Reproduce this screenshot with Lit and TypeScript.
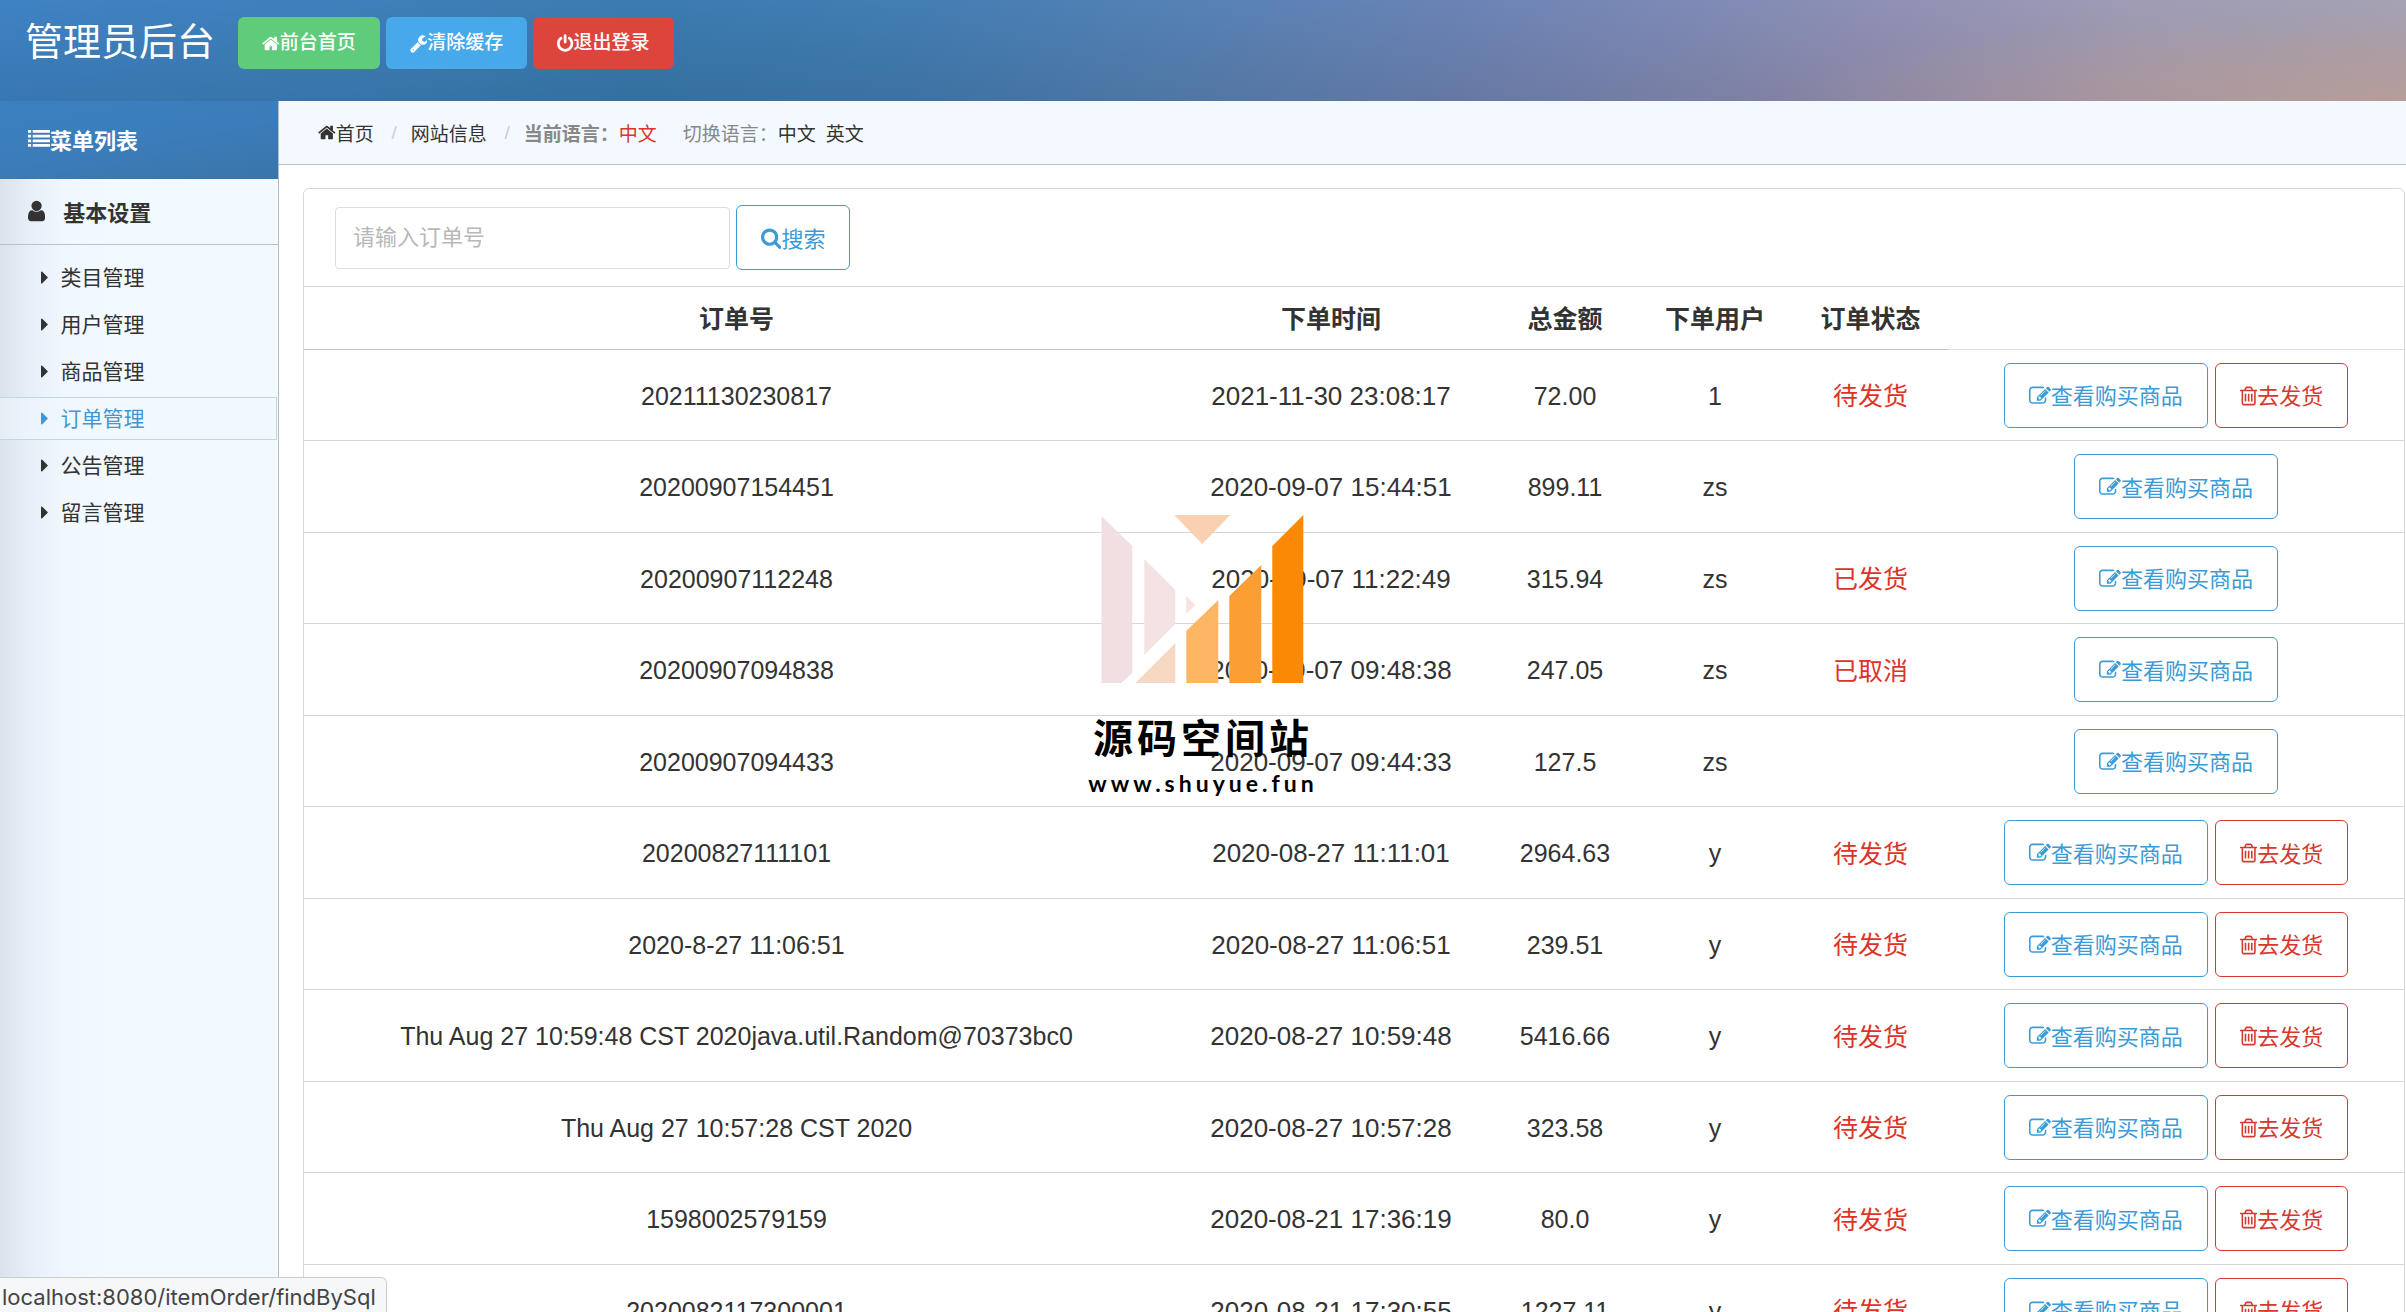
import { LitElement, html, css, svg } from "lit";
import { customElement } from "lit/decorators.js";
import { classMap } from "lit/directives/class-map.js";

const ICONS: Record<string, { x: number; w: number; d: string }> = {
  home: { x: 64, w: 1664, d: "M1472 992v480q0 26-19 45t-45 19h-384v-384h-256v384h-384q-26 0-45-19t-19-45v-480q0-1 .5-3t.5-3l575-474 575 474q1 2 1 6zm223-69l-62 74q-8 9-21 11h-3q-13 0-21-7l-692-577-692 577q-12 8-24 7-13-2-21-11l-62-74q-8-10-7-23.5t11-21.5l719-599q32-26 76-26t76 26l244 204v-195q0-14 9-23t23-9h192q14 0 23 9t9 23v408l219 182q10 8 11 21.5t-7 23.5z" },
  wrench: { x: 64, w: 1664, d: "M448 1472q0-26-19-45t-45-19-45 19-19 45 19 45 45 19 45-19 19-45zm644-420l-682 682q-37 37-90 37-52 0-91-37l-106-108q-38-36-38-90 0-53 38-91l681-681q39 98 114.5 173.5t173.5 114.5zm634-435q0 39-23 106-47 134-164.5 217.5t-258.5 83.5q-185 0-316.5-131.5t-131.5-316.5 131.5-316.5 316.5-131.5q58 0 121.5 16.5t107.5 46.5q16 11 16 28t-16 28l-293 169v224l193 107q5-3 79-48.5t135.5-81 70.5-35.5q15 0 23.5 10t8.5 25z" },
  power: { x: 128, w: 1536, d: "M1664 896q0 156-61 298t-164 245-245 164-298 61-298-61-245-164-164-245-61-298q0-182 80.5-343t226.5-270q43-32 95.5-25t83.5 50q32 42 24.5 94.5t-49.5 84.5q-98 74-151.5 181t-53.5 228q0 104 40.5 198.5t109.5 163.5 163.5 109.5 198.5 40.5 198.5-40.5 163.5-109.5 109.5-163.5 40.5-198.5q0-121-53.5-228t-151.5-181q-42-32-49.5-84.5t24.5-94.5q31-43 84-50t95 25q146 109 226.5 270t80.5 343zm-640-768v640q0 52-38 90t-90 38-90-38-38-90v-640q0-52 38-90t90-38 90 38 38 90z" },
  list: { x: 0, w: 1792, d: "M0 1312h256v224h-256zM0 928h256v224h-256zM0 544h256v224h-256zM0 160h256v224h-256zM384 1312h1408v224h-1408zM384 928h1408v224h-1408zM384 544h1408v224h-1408zM384 160h1408v224h-1408z" },
  user: { x: 256, w: 1280, d: "M1536 1399q0 109-62.5 187t-150.5 78h-854q-88 0-150.5-78t-62.5-187q0-85 8.5-160.5t31.5-152 58.5-131 94-89 134.5-34.5q131 128 313 128t313-128q76 0 134.5 34.5t94 89 58.5 131 31.5 152 8.5 160.5zm-256-887q0 159-112.5 271.5t-271.5 112.5-271.5-112.5-112.5-271.5 112.5-271.5 271.5-112.5 271.5 112.5 112.5 271.5z" },
  caret: { x: 576, w: 640, d: "M1152 896q0 26-19 45l-448 448q-19 19-45 19t-45-19-19-45v-896q0-26 19-45t45-19 45 19l448 448q19 19 19 45z" },
  search: { x: 64, w: 1664, d: "M1216 832q0-185-131.5-316.5t-316.5-131.5-316.5 131.5-131.5 316.5 131.5 316.5 316.5 131.5 316.5-131.5 131.5-316.5zm512 832q0 52-38 90t-90 38q-54 0-90-38l-343-342q-179 124-399 124-143 0-273.5-55.5t-225-150-150-225-55.5-273.5 55.5-273.5 150-225 225-150 273.5-55.5 273.5 55.5 225 150 150 225 55.5 273.5q0 220-124 399l343 343q37 37 37 90z" },
  edit: { x: 0, w: 1792, d: "M888 1184l116-116-152-152-116 116v56h96v96h56zm440-720q-16-16-33 1l-350 350q-17 17-1 33t33-1l350-350q17-17 1-33zm80 594v190q0 119-84.5 203.5t-203.5 84.5h-832q-119 0-203.5-84.5t-84.5-203.5v-832q0-119 84.5-203.5t203.5-84.5h832q63 0 117 25 15 7 18 23 3 17-9 29l-49 49q-14 14-32 8-23-6-45-6h-832q-66 0-113 47t-47 113v832q0 66 47 113t113 47h832q66 0 113-47t47-113v-126q0-13 9-22l64-64q15-15 35-7t20 29zm-96-738l288 288-672 672h-288v-288zm444 132l-92 92-288-288 92-92q28-28 68-28t68 28l152 152q28 28 28 68t-28 68z" },
  trash: { x: 192, w: 1408, d: "M704 736v576q0 14-9 23t-23 9h-64q-14 0-23-9t-9-23v-576q0-14 9-23t23-9h64q14 0 23 9t9 23zm256 0v576q0 14-9 23t-23 9h-64q-14 0-23-9t-9-23v-576q0-14 9-23t23-9h64q14 0 23 9t9 23zm256 0v576q0 14-9 23t-23 9h-64q-14 0-23-9t-9-23v-576q0-14 9-23t23-9h64q14 0 23 9t9 23zm128 724v-948h-896v948q0 22 7 40.5t14.5 27 10.5 8.5h832q3 0 10.5-8.5t14.5-27 7-40.5zm-672-1076h448l-48-117q-7-9-17-11h-317q-10 2-17 11zm928 32v64q0 14-9 23t-23 9h-96v948q0 83-47 143.5t-113 60.5h-832q-66 0-113-58.5t-47-141.5v-952h-96q-14 0-23-9t-9-23v-64q0-14 9-23t23-9h309l70-167q15-37 54-63t79-26h320q40 0 79 26t54 63l70 167h309q14 0 23 9t9 23z" },
};

const icon = (name: string) => {
  const i = ICONS[name];
  return html`<svg class="icon" viewBox="${i.x} 0 ${i.w} 1792" aria-hidden="true">${svg`<path d=${i.d}></path>`}</svg>`;
};

interface Order {
  id: string;
  time: string;
  total: string;
  user: string;
  status: string;
}

const ORDERS: Order[] = [
  { id: "20211130230817", time: "2021-11-30 23:08:17", total: "72.00", user: "1", status: "待发货" },
  { id: "20200907154451", time: "2020-09-07 15:44:51", total: "899.11", user: "zs", status: "" },
  { id: "20200907112248", time: "2020-09-07 11:22:49", total: "315.94", user: "zs", status: "已发货" },
  { id: "20200907094838", time: "2020-09-07 09:48:38", total: "247.05", user: "zs", status: "已取消" },
  { id: "20200907094433", time: "2020-09-07 09:44:33", total: "127.5", user: "zs", status: "" },
  { id: "20200827111101", time: "2020-08-27 11:11:01", total: "2964.63", user: "y", status: "待发货" },
  { id: "2020-8-27 11:06:51", time: "2020-08-27 11:06:51", total: "239.51", user: "y", status: "待发货" },
  { id: "Thu Aug 27 10:59:48 CST 2020java.util.Random@70373bc0", time: "2020-08-27 10:59:48", total: "5416.66", user: "y", status: "待发货" },
  { id: "Thu Aug 27 10:57:28 CST 2020", time: "2020-08-27 10:57:28", total: "323.58", user: "y", status: "待发货" },
  { id: "1598002579159", time: "2020-08-21 17:36:19", total: "80.0", user: "y", status: "待发货" },
  { id: "2020082117300001", time: "2020-08-21 17:30:55", total: "1227.11", user: "y", status: "待发货" },
];

const MENU = ["类目管理", "用户管理", "商品管理", "订单管理", "公告管理", "留言管理"];
const ACTIVE = "订单管理";

@customElement("app-root")
export class AppRoot extends LitElement {
  static styles = css`
    :host {
      display: flex;
      flex-direction: column;
      height: 100vh;
      overflow: hidden;
      position: relative;
      background: #fff;
      color: #333;
      font-family: "Liberation Sans", "Noto Sans CJK SC", sans-serif;
      font-size: 22px;
    }
    * { box-sizing: border-box; }
    a { color: inherit; text-decoration: none; }
    .icon { height: 1em; width: auto; fill: currentColor; flex: none; display: block; }

    .top {
      flex: none;
      display: flex;
      align-items: flex-start;
      height: 101px;
      padding: 17px 25px;
      background:
        radial-gradient(ellipse 620px 90px at 100% 100%, rgba(200, 162, 146, 0.55), rgba(200, 162, 146, 0)),
        linear-gradient(to bottom, rgba(90, 150, 220, 0.16), rgba(40, 70, 100, 0.14)),
        linear-gradient(100deg, #3a7fbf 0%, #3a7cb5 14%, #3676a8 27%, #3f79ac 38%, #557eae 49%, #6d80ae 60%, #8588ae 70%, #9c91ae 79%, #ac9dae 88%, #b5a5ac 100%);
    }
    .brand {
      margin: 0 23px 0 0;
      font-size: 38px;
      line-height: 50px;
      font-weight: 400;
      color: #fff;
    }
    .top-actions { display: flex; gap: 6px; }
    .btn {
      display: flex;
      align-items: center;
      justify-content: center;
      height: 52px;
      padding: 0 24px;
      border-radius: 6px;
      font-size: 19px;
      line-height: 28px;
      font-weight: 500;
      color: #fff;
      white-space: nowrap;
    }
    .green { background: #5ecc7b; }
    .blue { background: #47a8ea; }
    .red { background: #dd443c; }

    .body { flex: 1; min-height: 0; display: flex; }
    .side {
      flex: none;
      width: 279px;
      border-right: 1px solid #b5bcc4;
      background: linear-gradient(to right, #dbe2ea 0, #e6eef7 28px, #f0f7fe 64px, #f2f9ff 120px);
    }
    .side-title {
      display: flex;
      align-items: center;
      height: 78px;
      padding: 0 28px 2px;
      font-size: 22px;
      font-weight: 700;
      color: #fff;
      background: linear-gradient(170deg, #3a80c0, #3b7dba 50%, #3a75aa);
    }
    .group {
      display: flex;
      align-items: center;
      gap: 18px;
      height: 66px;
      margin: 0;
      padding: 0 28px 2px;
      border-bottom: 1px solid #b9c2cc;
      font-size: 22px;
      font-weight: 700;
    }
    .group .icon { height: 24px; }
    .menu { list-style: none; margin: 0; padding: 9px 0; font-size: 21px; line-height: 28px; }
    .menu-link {
      display: flex;
      align-items: center;
      gap: 12px;
      height: 43px;
      margin: 2px 1px 4px 0;
      padding: 0 0 0 41px;
      border: 1px solid transparent;
      border-left: 0;
    }
    .menu-link.active {
      color: #3f97d3;
      border-color: #c3d5e3;
      background: rgba(240, 250, 255, 0.5);
    }

    .main { flex: 1; min-width: 0; display: flex; flex-direction: column; }
    .crumbs {
      flex: none;
      display: flex;
      align-items: center;
      height: 64px;
      padding: 0 39px;
      border-bottom: 1px solid #b9bec4;
      background: #f3f9fe;
      font-size: 19px;
      white-space: nowrap;
    }
    .crumb { display: flex; align-items: center; }
    .sep { width: 37px; padding-left: 4px; text-align: center; color: #ccc; }
    .muted { color: #888; }
    .now { color: #dd3328; margin-right: 26px; }
    .lang { margin-right: 10px; }

    .panel {
      margin: 23px 1px 0 24px;
      border: 1px solid #d8d8d8;
      border-radius: 6px;
      flex: 1 0 auto;
    }
    .search { display: flex; align-items: center; gap: 6px; padding: 16px 31px; }
    .field {
      width: 395px;
      height: 62px;
      padding: 0 17px;
      border: 1px solid #ddd;
      border-radius: 4px;
      font: inherit;
      background: #fff;
      color: #333;
    }
    .field::placeholder { color: #b8b8b8; opacity: 1; }
    .outline {
      display: inline-flex;
      align-items: center;
      justify-content: center;
      height: 65px;
      padding: 0 24px 2px;
      border: 1px solid currentColor;
      border-radius: 6px;
      background: transparent;
      font: inherit;
      white-space: nowrap;
    }
    .outline .icon { margin-top: 3px; }
    .primary { color: #3c9ad6; }
    .danger { color: #d5382f; }

    .orders { width: 100%; table-layout: fixed; border-collapse: separate; border-spacing: 0; font-size: 25px; text-align: center; }
    .c-time { width: 324px; }
    .c-total { width: 144px; }
    .c-user { width: 156px; }
    .c-status { width: 155px; }
    .c-act { width: 456px; }
    .orders th { height: 64px; padding: 0 0 2px; border-top: 1px solid #d5d5d5; border-bottom: 1px solid #c0c0c0; font-weight: 700; }
    .orders th:last-child { border-bottom-color: #e0e0e0; }
    .orders td { height: 91px; padding: 2px 0 0; border-bottom: 1px solid #d5d5d5; }
    .orders tr:nth-child(even) td { height: 92px; }
    .orders .time { font-size: 26px; }
    .orders .state { padding: 0 0 2px; color: #dd3328; }
    .orders .ops { padding: 0; }
    .acts { display: flex; justify-content: center; gap: 7px; font-size: 22px; }

    .mark {
      position: absolute;
      left: 50%;
      top: 515px;
      transform: translateX(-50%);
      display: flex;
      flex-direction: column;
      align-items: center;
      color: #000;
      pointer-events: none;
    }
    .mark-logo { width: 203px; height: 169px; display: block; }
    .mark-name { margin-top: 25px; font-size: 40px; line-height: 60px; font-weight: 700; letter-spacing: 4px; white-space: nowrap; }
    .mark-url { font-family: Lato, sans-serif; font-size: 23px; line-height: 28px; font-weight: 700; letter-spacing: 4px; }

    .hint {
      position: absolute;
      left: 0;
      bottom: 0;
      height: 35px;
      padding: 3px 10px 0 2px;
      border: 1px solid #ccc;
      border-width: 1px 1px 0 0;
      border-radius: 0 6px 0 0;
      background: #f6f7f8;
      color: #444;
      font-family: Inter, sans-serif;
      font-size: 22px;
      line-height: 32px;
    }
  `;

  render() {
    return html`
      <header class="top">
        <h1 class="brand">管理员后台</h1>
        <nav class="top-actions">
          <a class="btn green" href="#home">${icon("home")}前台首页</a>
          <a class="btn blue" href="#cache">${icon("wrench")}清除缓存</a>
          <a class="btn red" href="#logout">${icon("power")}退出登录</a>
        </nav>
      </header>
      <div class="body">
        <aside class="side">
          <div class="side-title">${icon("list")}菜单列表</div>
          <h2 class="group">${icon("user")}基本设置</h2>
          <ul class="menu">
            ${MENU.map((m) => html`<li><a href="#menu" class=${classMap({ "menu-link": true, active: m === ACTIVE })}>${icon("caret")}${m}</a></li>`)}
          </ul>
        </aside>
        <main class="main">
          <div class="crumbs">
            <a class="crumb" href="#home">${icon("home")}首页</a>
            <span class="sep">/</span>
            <a href="#info">网站信息</a>
            <span class="sep">/</span>
            <b class="muted">当前语言：</b>
            <span class="now">中文</span>
            <span class="muted">切换语言：</span>
            <a class="lang" href="#zh">中文</a>
            <a class="lang" href="#en">英文</a>
          </div>
          <section class="panel">
            <form class="search" @submit=${(e: Event) => e.preventDefault()}>
              <input class="field" type="text" aria-label="订单号" placeholder="请输入订单号" />
              <button class="outline primary" type="submit">${icon("search")}搜索</button>
            </form>
            <table class="orders">
              <colgroup>
                <col /><col class="c-time" /><col class="c-total" /><col class="c-user" /><col class="c-status" /><col class="c-act" />
              </colgroup>
              <thead>
                <tr><th>订单号</th><th>下单时间</th><th>总金额</th><th>下单用户</th><th>订单状态</th><th></th></tr>
              </thead>
              <tbody>
                ${ORDERS.map((o) => html`
                  <tr>
                    <td>${o.id}</td>
                    <td class="time">${o.time}</td>
                    <td>${o.total}</td>
                    <td>${o.user}</td>
                    <td class="state">${o.status}</td>
                    <td class="ops">
                      <div class="acts">
                        <a class="outline primary" href="#view">${icon("edit")}查看购买商品</a>
                        ${o.status === "待发货" ? html`<a class="outline danger" href="#ship">${icon("trash")}去发货</a>` : ""}
                      </div>
                    </td>
                  </tr>`)}
              </tbody>
            </table>
          </section>
        </main>
      </div>
      <div class="mark">
        <svg class="mark-logo" viewBox="0 0 203 169" aria-hidden="true">
          <path fill="#f2dfe1" d="M0 1L31 31V158L20 168H0Z" />
          <path fill="#f5e3e4" d="M43 44L74 75V109L43 140Z" />
          <path fill="#f8e3e0" d="M85 81L94 90L85 99Z" />
          <path fill="#fad1b0" d="M73 0H129L101 29Z" />
          <path fill="#f7d9c3" d="M74 128V168H34Z" />
          <path fill="#fdb664" d="M85 116L117 85V168H85Z" />
          <path fill="#fb9f35" d="M128 81L160 50V168H128Z" />
          <path fill="#fb8903" d="M171 31L202 0V168H171Z" />
        </svg>
        <div class="mark-name">源码空间站</div>
        <div class="mark-url">www.shuyue.fun</div>
      </div>
      <div class="hint">localhost:8080/itemOrder/findBySql</div>
    `;
  }
}
